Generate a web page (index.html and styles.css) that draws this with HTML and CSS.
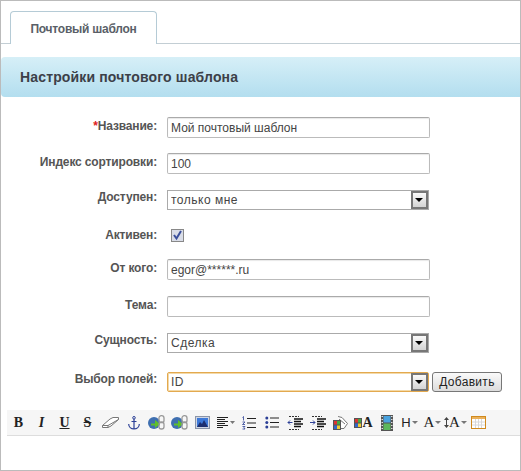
FILE: index.html
```html
<!DOCTYPE html>
<html lang="ru">
<head>
    <meta charset="UTF-8">
    <meta name="viewport" content="width=device-width, initial-scale=1.0">
    <title>Почтовый шаблон</title>
    <link rel="stylesheet" href="styles.css">
</head>
<body>

<div class="window">
    <div class="tabs">
        <div class="tab">Почтовый шаблон</div>
    </div>

    <h1 class="band">Настройки почтового шаблона</h1>

    <form class="form">
        <div class="row">
            <label class="name"><span class="req">*</span>Название:</label>
            <input class="field" type="text" value="Мой почтовый шаблон">
        </div>
        <div class="row tight">
            <label class="name">Индекс сортировки:</label>
            <input class="field" type="text" value="100">
        </div>
        <div class="row">
            <label class="name short">Доступен:</label>
            <div class="pick">
                <select><option>только мне</option></select>
                <span class="arrow"></span>
            </div>
        </div>
        <div class="row wide">
            <label class="name check-name">Активен:</label>
            <span class="check">
                <svg width="11" height="11" viewBox="0 0 11 11"><path d="M2 5l2.500 3.500L9 1" fill="none" stroke="#3a4f9c" stroke-width="2"/></svg>
            </span>
        </div>
        <div class="row after-check">
            <label class="name">От кого:</label>
            <input class="field" type="text" value="egor@******.ru">
        </div>
        <div class="row">
            <label class="name">Тема:</label>
            <input class="field" type="text">
        </div>
        <div class="row">
            <label class="name short">Сущность:</label>
            <div class="pick">
                <select><option>Сделка</option></select>
                <span class="arrow"></span>
            </div>
        </div>
        <div class="row wide">
            <label class="name short">Выбор полей:</label>
            <div class="pick focus">
                <select><option>ID</option></select>
                <span class="arrow"></span>
            </div>
            <button class="add" type="button">Добавить</button>
        </div>
    </form>

    <div class="toolbar">
        <span class="tool"><b class="t-b">B</b></span>
        <span class="tool"><i class="t-i">I</i></span>
        <span class="tool"><u class="t-u">U</u></span>
        <span class="tool"><s class="t-s">S</s></span>
        <span class="tool">
            <svg width="17" height="11" viewBox="0 0 17 11"><path d="M.5 10.500v-2L8 2l3-1.500h5.500v2L9 9l-3 1.500z" fill="#fff" stroke="#777"/><path d="M.5 8.500H6l10.500-6M6 8.500v2" fill="none" stroke="#777"/></svg>
        </span>
        <span class="tool">
            <svg width="12" height="14" viewBox="0 0 12 14"><circle cx="6" cy="1.800" r="1.300" fill="none" stroke="#2b3f96"/><path d="M6 3v10M3.500 5.500h5M.7 8c0 3 2.300 5 5.300 5s5.300-2 5.300-5" fill="none" stroke="#2b3f96" stroke-width="1.200"/></svg>
        </span>
        <span class="tool">
            <svg width="17" height="15" viewBox="0 0 17 15"><use href="#link"/></svg>
        </span>
        <span class="tool">
            <svg width="17" height="15" viewBox="0 0 17 15"><use href="#link"/></svg>
        </span>
        <span class="tool">
            <svg width="15" height="13" viewBox="0 0 15 13"><rect x=".5" y=".5" width="14" height="12" fill="#cfd6e4" stroke="#8a94a8"/><rect x="2" y="2" width="11" height="9" fill="#3c78d8"/><path d="M2 11l3-5 2 2 2-4 4 7z" fill="#1d2f70"/></svg>
        </span>
        <span class="tool">
            <svg width="18" height="11" viewBox="0 0 18 11"><path d="M0 .5h11M0 2.500h8M0 4.500h11M0 6.500h8M0 8.500h11M0 10.500h6" stroke="#222"/><path d="M13 4h5l-2.500 3z" fill="#777"/></svg>
        </span>
        <span class="tool">
            <svg width="14" height="14" viewBox="0 0 14 14"><path d="M.5 1.500l1-1V4.500M.5 6h2.500L.5 8.500H3M.5 10.500H3l-1 1 1 1.500H.5" fill="none" stroke="#2b3f96" stroke-width=".8"/><path d="M5 2.500h9M5 7h9M5 11.500h9" stroke="#222" stroke-width="1.200"/></svg>
        </span>
        <span class="tool">
            <svg width="14" height="13" viewBox="0 0 14 13"><circle cx="1.800" cy="2" r="1.500" fill="#2b3f96"/><circle cx="1.800" cy="6.500" r="1.500" fill="#2b3f96"/><circle cx="1.800" cy="11" r="1.500" fill="#2b3f96"/><path d="M5 2h9M5 6.500h9M5 11h9" stroke="#222" stroke-width="1.200"/></svg>
        </span>
        <span class="tool">
            <svg width="16" height="14" viewBox="0 0 16 14"><path d="M2 .5h10M2 13.500h10" stroke="#333" stroke-dasharray="2 1"/><path d="M7 3h9M7 5.500h7M7 8h9M7 10.500h7" stroke="#111" stroke-width="1.400"/><path d="M5.500 6.500H1M3 4.500l-2 2 2 2" fill="none" stroke="#2b3f96"/></svg>
        </span>
        <span class="tool">
            <svg width="16" height="14" viewBox="0 0 16 14"><path d="M2 .5h10M2 13.500h10" stroke="#333" stroke-dasharray="2 1"/><path d="M7 3h9M7 5.500h7M7 8h9M7 10.500h7" stroke="#111" stroke-width="1.400"/><path d="M0 6.500h5M3 4.500l2 2-2 2" fill="none" stroke="#2b3f96"/></svg>
        </span>
        <span class="tool">
            <svg width="15" height="14" viewBox="0 0 15 14"><path d="M5 .5l4 1 5.500 6-3.500 5H7" fill="#fff" stroke="#777"/><path d="M6 3l6 5" stroke="#777"/><rect y="4" width="8" height="10" fill="#555"/><rect x="1" y="5" width="3" height="3.500" fill="#d33"/><rect x="4" y="5" width="3" height="3.500" fill="#4a4"/><rect x="1" y="9.500" width="3" height="3.500" fill="#36c"/><rect x="4" y="9.500" width="3" height="3.500" fill="#ec3"/></svg>
        </span>
        <span class="tool color-a">
            <svg width="8" height="10" viewBox="0 0 8 10"><rect width="8" height="10" fill="#555"/><rect x="1" y="1" width="3" height="3.500" fill="#d33"/><rect x="4" y="1" width="3" height="3.500" fill="#4a4"/><rect x="1" y="5.500" width="3" height="3.500" fill="#36c"/><rect x="4" y="5.500" width="3" height="3.500" fill="#ec3"/></svg><span class="t-a">A</span>
        </span>
        <span class="tool">
            <svg width="12" height="16" viewBox="0 0 12 16"><rect width="12" height="16" fill="#555"/><path d="M.5 1H2v1H.5zM.5 4H2v1H.5zM.5 7H2v1H.5zM.5 10H2v1H.5zM.5 13H2v1H.5zM10 1h1.500v1H10zM10 4h1.500v1H10zM10 7h1.500v1H10zM10 10h1.500v1H10zM10 13h1.500v1H10z" fill="#ddd"/><rect x="2.500" y="1" width="7" height="6.500" fill="#4aa3df"/><rect x="2.500" y="8.500" width="7" height="6.500" fill="#5cb85c"/></svg>
        </span>
        <span class="tool"><span class="t-h">H</span><span class="mini"></span></span>
        <span class="tool"><span class="t-a">A</span><span class="mini"></span></span>
        <span class="tool">
            <svg width="5" height="11" viewBox="0 0 5 11"><path d="M2.500 0L5 3H0zM2.500 11L0 8h5zM2 3h1v5H2z" fill="#444"/></svg><span class="t-a">A</span><span class="mini"></span>
        </span>
        <span class="tool">
            <svg width="15" height="13" viewBox="0 0 15 13"><rect x=".5" y=".5" width="14" height="12" fill="#fff" stroke="#d08a1e"/><rect x="1" y="1" width="13" height="2" fill="#eab15c"/><path d="M1 6h13M1 9h13M4.500 3v9M7.500 3v9M10.500 3v9" stroke="#d8d8d8"/></svg>
        </span>
    </div>
</div>

<svg class="defs" width="0" height="0">
    <symbol id="link" viewBox="0 0 17 15">
        <circle cx="6" cy="8" r="6" fill="#3f6fb0"/>
        <path d="M3 8.500h4V5l5 4-5 4v-2.500H3z" fill="#5fc02a"/>
        <rect x="11" y=".7" width="5" height="7" rx="2.300" fill="none" stroke="#999" stroke-width="1.300"/>
        <rect x="11" y="7" width="5" height="7" rx="2.300" fill="none" stroke="#999" stroke-width="1.300"/>
    </symbol>
</svg>

</body>
</html>
```

FILE: styles.css
```css
* {
    box-sizing: border-box;
}
body {
    margin: 0;
    font-family: "Liberation Sans", Arial, sans-serif;
    font-size: 12px;
    background: white;
}
.window {
    width: 521px;
    height: 471px;
    border: 1px solid #bbb;
    overflow: hidden;
}
.tabs {
    display: flex;
    height: 43px;
    padding: 10px 0 0 9px;
    border-bottom: 1px solid #c3ced4;
}
.tab {
    width: 147px;
    height: 33px;
    padding-top: 10px;
    text-align: center;
    font-weight: bold;
    letter-spacing: -0.25px;
    color: #5a5f68;
    background: white;
    border: 1px solid #b5cbd6;
    border-bottom: none;
    border-radius: 4px 4px 0 0;
}
.band {
    height: 40px;
    margin: 13px 0 0;
    padding-left: 19px;
    font-size: 14px;
    line-height: 40px;
    letter-spacing: 0.15px;
    color: #3c4048;
    border-radius: 4px 0 0 4px;
    background: linear-gradient(#d6eff7, #b3deef);
}
.form {
    padding-top: 20px;
}
.row {
    display: flex;
    align-items: flex-start;
    margin-bottom: 16px;
}
.row:last-of-type {
    margin-bottom: 0;
}
.row.tight {
    margin-top: -1px;
}
.row.wide {
    margin-top: 19px;
}
.row.after-check {
    margin-top: 17px;
}
.name {
    flex: none;
    width: 156px;
    margin-right: 10px;
    line-height: 18px;
    text-align: right;
    font-weight: bold;
    letter-spacing: -0.15px;
    color: #555;
}
.name.short {
    line-height: 15px;
}
.name.check-name {
    line-height: 13px;
}
.req {
    color: #e02020;
}
.field {
    width: 263px;
    height: 21px;
    padding: 1px 3px;
    font: 12px "Liberation Sans", Arial, sans-serif;
    color: #444;
    border: 1px solid #bbb;
    border-top-color: #aaa;
    border-radius: 2px;
    box-shadow: inset 0 1px 1px #e8e8e8;
}
.pick {
    position: relative;
    width: 262px;
    height: 20px;
}
.pick select {
    display: block;
    width: 100%;
    height: 100%;
    padding: 0 3px;
    font: 12px "Liberation Sans", Arial, sans-serif;
    letter-spacing: 0.5px;
    color: #444;
    background: white;
    border: 1px solid #aaa;
    border-radius: 0;
    appearance: none;
}
.pick.focus select {
    border-color: #e3a94f;
    border-radius: 2px;
    box-shadow: inset 0 0 0 1px #f3d9a8;
}
.arrow {
    position: absolute;
    top: 1px;
    right: 1px;
    width: 17px;
    height: 18px;
    border: 2px solid #777;
    background: linear-gradient(#fafafa, #d4d4d4);
}
.arrow::after {
    content: "";
    position: absolute;
    top: 5px;
    left: 2px;
    border: 4px solid transparent;
    border-top: 4px solid black;
    border-bottom: none;
}
.check {
    display: flex;
    align-items: center;
    justify-content: center;
    width: 13px;
    height: 13px;
    margin-left: 4px;
    border: 1px solid #888;
    background: #d9dde8;
}
.add {
    width: 70px;
    height: 20px;
    margin-left: 3px;
    padding: 0;
    font: 12px "Liberation Sans", Arial, sans-serif;
    letter-spacing: 0.3px;
    color: #222;
    border: 1px solid #777;
    border-radius: 3px;
    background: linear-gradient(#fafafa, #dcdcdc);
}
.toolbar {
    display: flex;
    height: 26px;
    margin: 18px 0 0 6px;
    background: #f6f6f6;
    border-bottom: 1px solid #ddd;
}
.tool {
    display: flex;
    flex: none;
    width: 23px;
    align-items: center;
    justify-content: center;
    font-family: "Liberation Serif", serif;
    color: #222;
}
.t-b, .t-i, .t-u, .t-s {
    font-size: 14px;
    font-weight: bold;
}
.t-a {
    font-size: 15px;
    line-height: 1;
}
.t-h {
    font-family: "Liberation Sans", Arial, sans-serif;
    font-size: 13px;
}
.mini {
    margin-left: 1px;
    border: 3px solid transparent;
    border-top: 3px solid #777;
    border-bottom: none;
}
.color-a .t-a {
    font-size: 14px;
    font-weight: bold;
}
.defs {
    position: absolute;
}
```
